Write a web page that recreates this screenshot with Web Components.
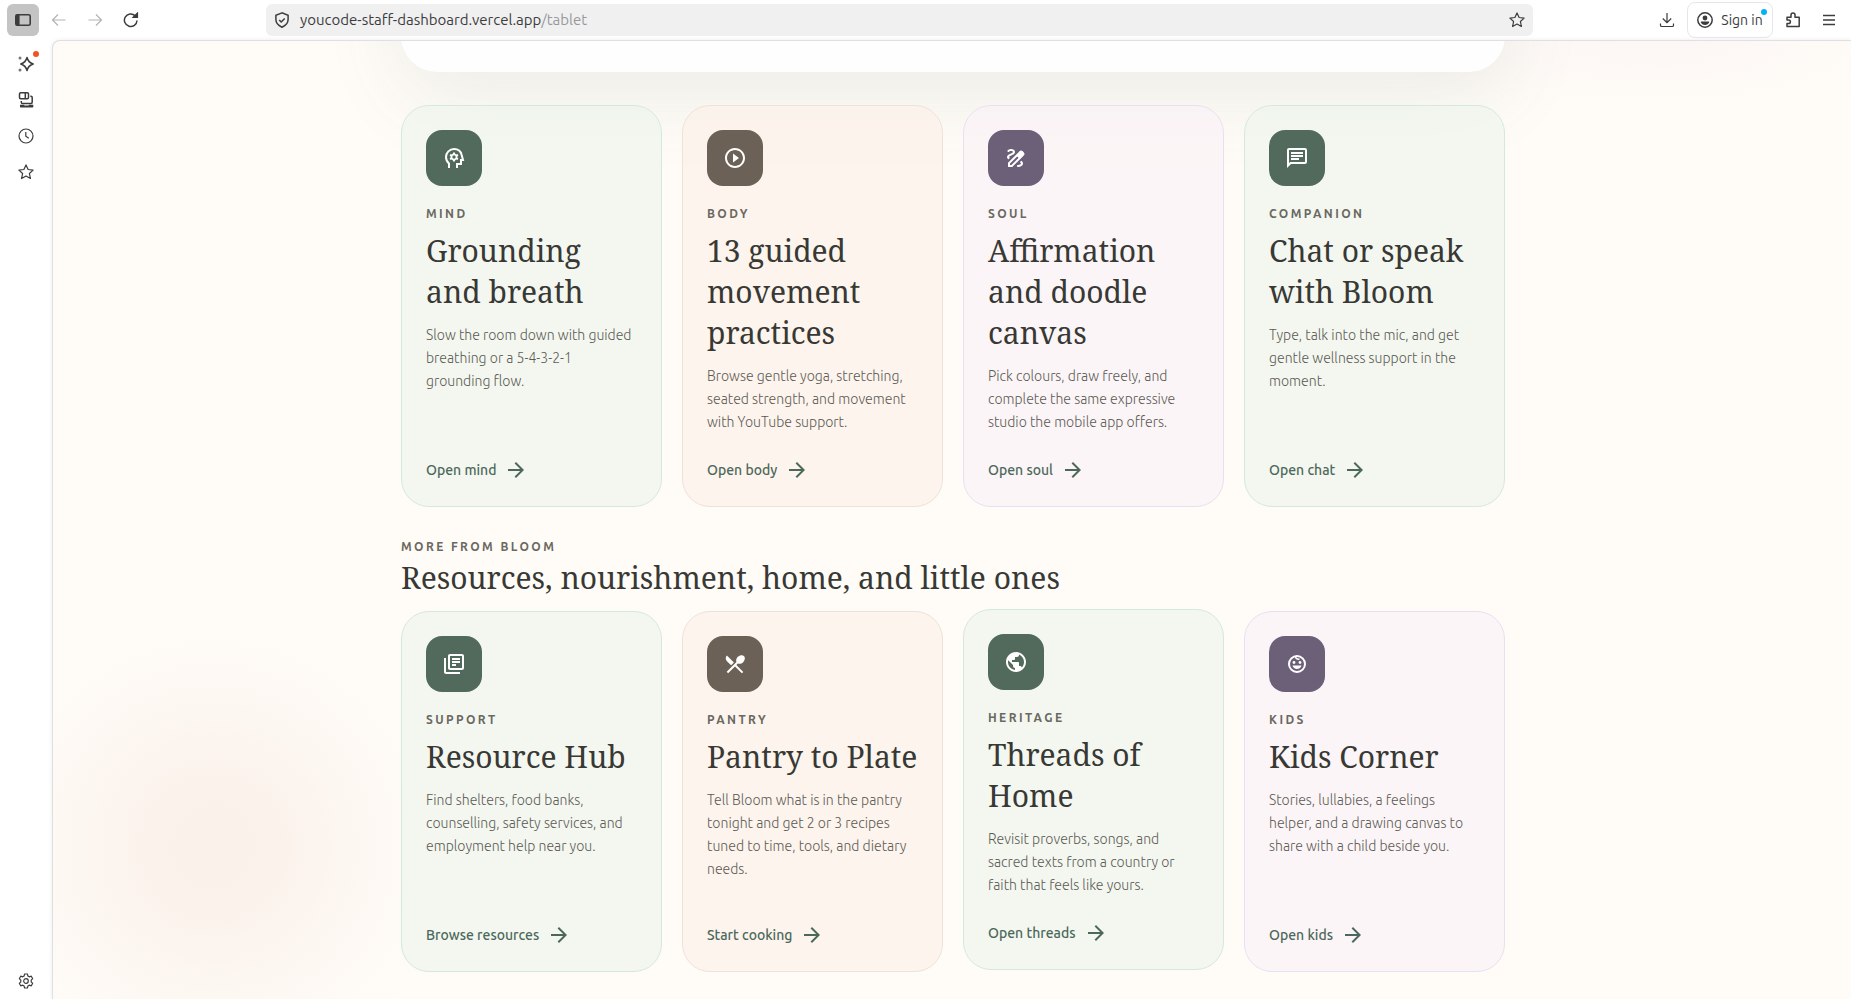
<!DOCTYPE html>
<html lang="en">
<head>
<meta charset="utf-8">
<title>Bloom</title>
<style>
    html, body { height: 100%; margin: 0; }
    body { background-color: #fff; font-family: Ubuntu, "Noto Sans", sans-serif; font-size: 14px; overflow: hidden; }
</style>
</head>
<body>

<browser-window>
    <browser-toolbar slot="toolbar"></browser-toolbar>
    <browser-sidebar slot="sidebar"></browser-sidebar>

    <bloom-page>
        <bloom-hero></bloom-hero>

        <card-grid>
            <bloom-card tone="green" icon="mind" href="#mind">
                <span slot="label">Mind</span>
                <span slot="tit">Grounding and breath</span>
                <span slot="txt">Slow the room down with guided breathing or a 5-4-3-2-1 grounding flow.</span>
                <span slot="link">Open mind</span>
            </bloom-card>
            <bloom-card tone="peach" icon="play" href="#body">
                <span slot="label">Body</span>
                <span slot="tit">13 guided movement practices</span>
                <span slot="txt">Browse gentle yoga, stretching, seated strength, and movement with YouTube support.</span>
                <span slot="link">Open body</span>
            </bloom-card>
            <bloom-card tone="lilac" icon="draw" href="#soul">
                <span slot="label">Soul</span>
                <span slot="tit">Affirmation and doodle canvas</span>
                <span slot="txt">Pick colours, draw freely, and complete the same expressive studio the mobile app offers.</span>
                <span slot="link">Open soul</span>
            </bloom-card>
            <bloom-card tone="green" icon="chat" href="#chat">
                <span slot="label">Companion</span>
                <span slot="tit">Chat or speak with Bloom</span>
                <span slot="txt">Type, talk into the mic, and get gentle wellness support in the moment.</span>
                <span slot="link">Open chat</span>
            </bloom-card>
        </card-grid>

        <section-title>
            <span slot="label">More from Bloom</span>
            <span slot="tit">Resources, nourishment, home, and little ones</span>
        </section-title>

        <card-grid>
            <bloom-card tone="green" icon="books" href="#resources">
                <span slot="label">Support</span>
                <span slot="tit">Resource Hub</span>
                <span slot="txt">Find shelters, food banks, counselling, safety services, and employment help near you.</span>
                <span slot="link">Browse resources</span>
            </bloom-card>
            <bloom-card tone="peach" icon="food" href="#pantry">
                <span slot="label">Pantry</span>
                <span slot="tit">Pantry to Plate</span>
                <span slot="txt">Tell Bloom what is in the pantry tonight and get 2 or 3 recipes tuned to time, tools, and dietary needs.</span>
                <span slot="link">Start cooking</span>
            </bloom-card>
            <bloom-card tone="green" icon="globe" href="#threads" active>
                <span slot="label">Heritage</span>
                <span slot="tit">Threads of Home</span>
                <span slot="txt">Revisit proverbs, songs, and sacred texts from a country or faith that feels like yours.</span>
                <span slot="link">Open threads</span>
            </bloom-card>
            <bloom-card tone="lilac" icon="child" href="#kids">
                <span slot="label">Kids</span>
                <span slot="tit">Kids Corner</span>
                <span slot="txt">Stories, lullabies, a feelings helper, and a drawing canvas to share with a child beside you.</span>
                <span slot="link">Open kids</span>
            </bloom-card>
        </card-grid>
    </bloom-page>
</browser-window>

<script>
// 24px filled icons of the cards
const cardIcons = {
    mind: `<path fill="none" stroke="currentColor" stroke-width="2" d="M7 22v-4.6C5 15.700 4 13.400 4 11c0-4.400 3.600-8 8-8 3.800 0 6.900 2.500 7.700 6L21 14h-2v4h-4v4"/><path fill-rule="evenodd" d="M11.100 6.500h1.800l.3 1.300 1 .6 1.300-.4.9 1.500-1 .9v1.200l1 .9-.9 1.500-1.300-.4-1 .6-.3 1.300h-1.800l-.3-1.300-1-.6-1.300.4-.9-1.500 1-.9v-1.200l-1-.9.9-1.500 1.300.4 1-.6zM12 9.300a1.700 1.700 0 1 0 0 3.400 1.700 1.700 0 0 0 0-3.400z"/>`,
    play: `<path d="M10 16.500l6-4.500-6-4.500v9zM12 2C6.480 2 2 6.480 2 12s4.480 10 10 10 10-4.480 10-10S17.520 2 12 2zm0 18c-4.410 0-8-3.590-8-8s3.590-8 8-8 8 3.590 8 8-3.590 8-8 8z"/>`,
    draw: `<path fill-rule="evenodd" d="M18.850 10.390l1.060-1.060c.78-.78.78-2.050 0-2.830L18.500 5.090c-.78-.78-2.050-.78-2.830 0l-1.060 1.060 4.240 4.240zM14.610 6.150L4 16.760V21h4.240l10.610-10.610-4.240-4.240zM7.410 19H6v-1.410l7.190-7.200 1.410 1.410L7.410 19zM19 17.500c0 2.190-2.540 3.500-5 3.500-.55 0-1-.45-1-1s.45-1 1-1c1.540 0 3-.73 3-1.500 0-.47-.48-.87-1.230-1.200l1.480-1.480c1.070.63 1.750 1.470 1.750 2.680zM4.580 13.350C3.610 12.790 3 12.060 3 11c0-1.800 1.890-2.630 3.560-3.360C7.590 7.180 9 6.560 9 6c0-.41-.78-1-2-1-1.260 0-1.800.61-1.830.64-.35.41-.98.46-1.400.12-.41-.34-.49-.95-.15-1.380C3.730 4.240 4.760 3 7 3s4 1.320 4 3c0 1.870-1.930 2.720-3.640 3.470C6.420 9.880 5 10.500 5 11c0 .31.43.6 1.070.86l-1.490 1.490z"/>`,
    chat: `<path d="M4 4h16v12H5.170L4 17.170V4m0-2c-1.100 0-1.990.9-1.990 2L2 22l4-4h14c1.100 0 2-.9 2-2V4c0-1.100-.9-2-2-2H4zm2 10h8v2H6v-2zm0-3h12v2H6V9zm0-3h12v2H6V6z"/>`,
    books: `<path d="M4 6H2v14c0 1.100.9 2 2 2h14v-2H4V6zm16-4H8c-1.100 0-2 .9-2 2v12c0 1.100.9 2 2 2h12c1.100 0 2-.9 2-2V4c0-1.100-.9-2-2-2zm0 14H8V4h12v12zM10 9h8v2h-8zm0 3h4v2h-4zm0-6h8v2h-8z"/>`,
    food: `<path d="M8.100 13.340l2.830-2.830L3.910 3.500c-1.560 1.560-1.560 4.090 0 5.660l4.190 4.180zm6.780-1.810c1.530.71 3.680.21 5.270-1.380 1.910-1.910 2.280-4.650.81-6.120-1.460-1.460-4.200-1.100-6.120.81-1.590 1.590-2.090 3.740-1.380 5.270L3.700 19.870l1.410 1.410L12 14.410l6.880 6.880 1.410-1.410L13.410 13l1.470-1.470z"/>`,
    globe: `<path d="M12 2C6.480 2 2 6.480 2 12s4.480 10 10 10 10-4.480 10-10S17.520 2 12 2zm-1 17.930c-3.950-.49-7-3.850-7-7.930 0-.62.08-1.210.21-1.790L9 15v1c0 1.100.9 2 2 2v1.930zm6.900-2.540c-.26-.81-1-1.390-1.900-1.390h-1v-3c0-.55-.45-1-1-1H8v-2h2c.55 0 1-.45 1-1V7h2c1.100 0 2-.9 2-2v-.41c2.930 1.190 5 4.060 5 7.410 0 2.080-.8 3.970-2.100 5.390z"/>`,
    child: `<circle cx="12" cy="12" r="8" fill="none" stroke="currentColor" stroke-width="2"/><path fill="none" stroke="currentColor" stroke-width="1.500" d="M10.500 4c0 2.500 1.500 3.500 4 3"/><circle cx="9" cy="10.500" r="1.400"/><circle cx="15" cy="10.500" r="1.400"/><path d="M7.500 13.500h9c-.6 2.200-2.300 3.500-4.500 3.500s-3.900-1.300-4.500-3.500z"/>`
};

// 16px line icons of the browser frame
const lineIcons = {
    panel: `<rect x=".8" y="2.800" width="14.400" height="10.400" rx="1.500" stroke-width="1.600"/><path d="M1.500 3h2.500v10H1.500z" fill="currentColor"/>`,
    back: `<path d="M14.500 8H1.800M7 2.500L1.500 8 7 13.500"/>`,
    forward: `<path d="M1.500 8h12.700M9 2.500L14.500 8 9 13.500"/>`,
    reload: `<path stroke-width="1.500" d="M14 8.500A6.300 6.300 0 1 1 12 3.600"/><path fill="currentColor" d="M14.500 1v4.500H10z"/>`,
    shield: `<path stroke-width="1.500" d="M8 .9L1.900 3.200v4.300c0 3.400 2.400 6 6.100 7.700 3.700-1.700 6.100-4.300 6.100-7.700V3.200zM5.200 8l2 2 3.500-3.500"/>`,
    star: `<path stroke-linejoin="round" d="M8 .9l2.100 4.600 5 .6-3.700 3.400 1 5L8 12l-4.400 2.500 1-5L.9 6.100l5-.6z"/>`,
    download: `<path d="M8 1v9.500M3.800 6.500L8 10.700l4.200-4.200M1.500 11.500v1.700c0 .8.6 1.300 1.300 1.300h10.400c.7 0 1.300-.5 1.300-1.300v-1.700"/>`,
    user: `<circle cx="8" cy="8" r="7.200" stroke-width="1.500"/><circle cx="8" cy="6" r="2.400" fill="currentColor" stroke="none"/><path fill="currentColor" stroke="none" d="M4.500 9.600h7c.8 0 .9.600.5 1.200C11 12.200 9.700 13 8 13s-3-.8-4-2.200c-.4-.6-.3-1.200.5-1.200z"/>`,
    puzzle: `<path stroke-width="1.500" stroke-linejoin="round" d="M2 14.500V11.500h1.600a1.800 1.800 0 0 0 0-3.600H2V5.200h4V3a2 2 0 0 1 4 0v2.200h4.200v9.300z"/>`,
    menu: `<path stroke-width="1.500" d="M2 3.500h12M2 8h12M2 12.500h12"/>`,
    sparkle: `<path stroke-width="1.500" stroke-linejoin="round" d="M9 1.500c.9 3.600 2.700 5.400 6.200 6.500C11.700 9.100 9.900 10.900 9 14.500 8.100 10.900 6.300 9.100 2.800 8 6.300 6.900 8.100 5.100 9 1.500z"/><g fill="#77777a" stroke="none"><circle cx="2" cy="2" r="1.500"/><circle cx="2" cy="14" r="1.500"/></g>`,
    devices: `<rect x="1.500" y=".8" width="9" height="6" rx="1.200" stroke-width="1.500"/><path stroke-width="1.500" d="M7.300 1v5.500M12.300 4.200h.7c.7 0 1.200.5 1.200 1.200v4.800c0 .7-.5 1.200-1.200 1.200H4.500c-.7 0-1.200-.5-1.200-1.200V9"/><path fill="currentColor" stroke="none" d="M2 12.800h4l.5.800h4l.5-.8h4.300v1.700c0 .7-.4 1-1 1H3c-.6 0-1-.3-1-1z"/>`,
    clock: `<circle cx="8" cy="8" r="7"/><path d="M7.800 4v4.200l3 2"/>`,
    gear: `<circle cx="8" cy="8" r="2.300"/><path stroke-linejoin="round" d="M6.600 1h2.800l.5 2 1.300.8 2.100-.6 1.400 2.500-1.500 1.500v1.600l1.500 1.500-1.400 2.500-2.100-.6-1.300.8-.5 2H6.600l-.5-2-1.300-.8-2.100.6-1.400-2.500 1.500-1.500V7.200L1.300 5.700l1.400-2.500 2.100.6L6.100 3z"/>`
};

const lineIcon = (name) => `<svg width="16" height="16" viewBox="0 0 16 16" fill="none" stroke="currentColor" stroke-width="1.200" aria-hidden="true">${lineIcons[name]}</svg>`;


class BrowserWindow extends HTMLElement {
    constructor() {
        super();

        this.attachShadow({ mode: 'open' });

        this.shadowRoot.innerHTML = `
            <slot name="toolbar"></slot>
            <div class="body">
                <slot name="sidebar"></slot>
                <slot></slot>
            </div>

            <style>
                :host { display: flex; flex-direction: column; height: 100vh; background-color: #fff; }
                .body { display: flex; flex: 1; min-height: 0; }
            </style>
        `;
    }
}

customElements.define('browser-window', BrowserWindow);


class BrowserToolbar extends HTMLElement {
    constructor() {
        super();

        this.attachShadow({ mode: 'open' });

        this.shadowRoot.innerHTML = `
            <div class="nav">
                <button class="on" aria-label="Toggle sidebar">${lineIcon('panel')}</button>
                <button disabled aria-label="Back">${lineIcon('back')}</button>
                <button disabled aria-label="Forward">${lineIcon('forward')}</button>
                <button aria-label="Reload">${lineIcon('reload')}</button>
            </div>
            <div class="url">
                <button aria-label="Site information">${lineIcon('shield')}</button>
                <p>youcode-staff-dashboard.vercel.app<span>/tablet</span></p>
                <button aria-label="Bookmark">${lineIcon('star')}</button>
            </div>
            <div class="tools">
                <button aria-label="Downloads">${lineIcon('download')}</button>
                <button class="sign">${lineIcon('user')}Sign in<i></i></button>
                <button aria-label="Extensions">${lineIcon('puzzle')}</button>
                <button aria-label="Menu">${lineIcon('menu')}</button>
            </div>

            <style>
                :host { display: flex; align-items: center; height: 40px; padding: 0 6px 0 7px; color: #3c3c3e; }
                button { display: flex; align-items: center; justify-content: center; width: 32px; height: 32px; padding: 0; border: 0; border-radius: 6px; background: none; color: inherit; font: inherit; }
                button:disabled { color: #b4b4b6; }
                .nav { display: flex; flex: 0 0 259px; gap: 4px; }
                .on { background-color: #c4c4c4; }
                .url { display: flex; flex: 1; align-items: center; height: 32px; border-radius: 6px; background-color: #f0f0f0; }
                .url p { flex: 1; margin: 0 0 0 2px; font-size: 15px; line-height: 32px; white-space: nowrap; }
                .url p span { color: #98989a; }
                .tools { display: flex; flex: 0 0 312px; align-items: center; justify-content: flex-end; gap: 4px; }
                .tools .sign { position: relative; gap: 8px; width: 86px; height: 36px; border: 1px solid #e6e6ea; border-radius: 8px; }
                .sign i { position: absolute; top: 6px; right: 5px; width: 6px; height: 6px; border-radius: 50%; background-color: #00b3f4; }
            </style>
        `;
    }
}

customElements.define('browser-toolbar', BrowserToolbar);


class BrowserSidebar extends HTMLElement {
    constructor() {
        super();

        this.attachShadow({ mode: 'open' });

        this.shadowRoot.innerHTML = `
            <button class="new" aria-label="AI chat">${lineIcon('sparkle')}</button>
            <button aria-label="Synced tabs">${lineIcon('devices')}</button>
            <button aria-label="History">${lineIcon('clock')}</button>
            <button aria-label="Bookmarks">${lineIcon('star')}</button>
            <button class="last" aria-label="Settings">${lineIcon('gear')}</button>

            <style>
                :host { display: flex; flex: 0 0 52px; flex-direction: column; align-items: center; gap: 4px; box-sizing: border-box; padding: 8px 0 2px; color: #3c3c3e; }
                button { position: relative; display: flex; align-items: center; justify-content: center; width: 32px; height: 32px; padding: 0; border: 0; background: none; color: inherit; }
                .new::after { content: ""; position: absolute; top: 3px; right: 3px; width: 6px; height: 6px; border-radius: 50%; background-color: #f05423; }
                .last { margin-top: auto; }
            </style>
        `;
    }
}

customElements.define('browser-sidebar', BrowserSidebar);


class BloomPage extends HTMLElement {
    constructor() {
        super();

        this.attachShadow({ mode: 'open' });

        this.shadowRoot.innerHTML = `
            <main><slot></slot></main>

            <style>
                :host {
                    display: block; flex: 1; min-width: 0; overflow: hidden; box-sizing: border-box; padding-left: 2px;
                    border: solid #e0e0e4; border-width: 1px 0 0 1px; border-top-left-radius: 8px;
                    box-shadow: 0 0 4px rgba(0, 0, 0, 0.08);
                    background:
                        radial-gradient(circle at 160px calc(100% - 152px), rgba(244, 224, 216, 0.42) 0, rgba(244, 224, 216, 0.36) 70px, rgba(244, 228, 220, 0.18) 150px, rgba(244, 228, 220, 0) 240px),
                        radial-gradient(ellipse 280px 80px at calc(100% - 200px) 0, rgba(246, 234, 240, 0.3), rgba(246, 234, 240, 0)),
                        #fffcf7;
                }
                main { max-width: 1104px; margin: 0 auto; }
            </style>
        `;
    }
}

customElements.define('bloom-page', BloomPage);


// the page is scrolled: only the foot of this panel is in view
class BloomHero extends HTMLElement {
    constructor() {
        super();

        this.attachShadow({ mode: 'open' });

        this.shadowRoot.innerHTML = `
            <style>
                :host { display: block; height: 400px; margin: -369px 0 33px; border-radius: 36px; background-color: #fffefe; box-shadow: 0 24px 80px rgba(82, 98, 90, 0.1); }
            </style>
        `;
    }
}

customElements.define('bloom-hero', BloomHero);


class CardGrid extends HTMLElement {
    constructor() {
        super();

        this.attachShadow({ mode: 'open' });

        this.shadowRoot.innerHTML = `
            <slot></slot>

            <style>
                :host { display: grid; grid-template-columns: repeat(4, 1fr); gap: 20px; }
            </style>
        `;
    }
}

customElements.define('card-grid', CardGrid);


class SectionTitle extends HTMLElement {
    constructor() {
        super();

        this.attachShadow({ mode: 'open' });

        this.shadowRoot.innerHTML = `
            <p class="label"><slot name="label"></slot></p>
            <h2><slot name="tit"></slot></h2>

            <style>
                :host { display: block; margin: 32px 0 12px; }
                .label { margin: 0; color: #6a6860; font-size: 12px; font-weight: 700; letter-spacing: 0.2em; line-height: 16px; text-transform: uppercase; }
                h2 { margin: 2px 0 0; color: #383834; font: 400 30px/42px "Noto Serif", serif; }
            </style>
        `;
    }
}

customElements.define('section-title', SectionTitle);


class BloomCard extends HTMLElement {
    constructor() {
        super();

        this.attachShadow({ mode: 'open' });

        this.shadowRoot.innerHTML = `
            <div class="icon"><svg width="24" height="24" viewBox="0 0 24 24" fill="currentColor" aria-hidden="true">${cardIcons[this.getAttribute('icon')]}</svg></div>
            <p class="label"><slot name="label"></slot></p>
            <h3><slot name="tit"></slot></h3>
            <p class="txt"><slot name="txt"></slot></p>
            <a href="${this.getAttribute('href')}">
                <slot name="link"></slot>
                <svg width="24" height="24" viewBox="0 0 24 24" fill="currentColor" aria-hidden="true"><path d="M12 4l-1.410 1.410L16.170 11H4v2h12.170l-5.580 5.590L12 20l8-8z"/></svg>
            </a>

            <style>
                :host { display: flex; flex-direction: column; align-items: flex-start; padding: 24px; border: 1px solid var(--line); border-radius: 28px; background-color: var(--bg); }
                :host([tone="green"]) { --bg: rgba(238, 245, 237, 0.7); --line: #d5e8de; --icon: #526a5c; }
                :host([tone="peach"]) { --bg: rgba(251, 241, 232, 0.7); --line: #efe1d8; --icon: #6c6156; }
                :host([tone="lilac"]) { --bg: rgba(249, 242, 247, 0.7); --line: #e9dff3; --icon: #6c5f78; }
                :host([active]) { transform: translateY(-2px); }
                .icon { display: flex; align-items: center; justify-content: center; width: 56px; height: 56px; border-radius: 16px; background-color: var(--icon); color: #fff; }
                .label { margin: 20px 0 8px; color: #6a6860; font-size: 12px; font-weight: 700; letter-spacing: 0.2em; line-height: 16px; text-transform: uppercase; }
                h3 { margin: 0 0 12px; color: #383834; font: 400 30px/41px "Noto Serif", serif; }
                .txt { margin: 0 0 24px; color: #5c5a54; font-weight: 300; line-height: 23px; }
                a { display: flex; align-items: center; gap: 8px; margin-top: auto; color: #4c685a; font-weight: 500; line-height: 24px; text-decoration: none; }
            </style>
        `;
    }
}

customElements.define('bloom-card', BloomCard);
</script>
</body>
</html>
